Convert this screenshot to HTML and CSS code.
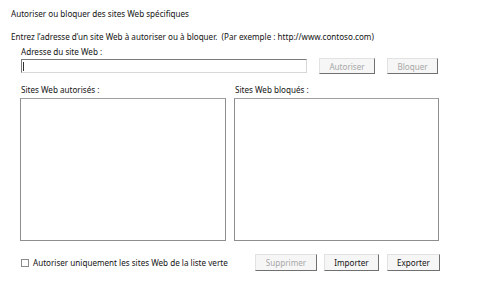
FILE: index.html
```html
<!DOCTYPE html>
<html lang="fr">
<head>
	<meta charset="UTF-8">
	<title>Sites Web spécifiques</title>
	<link rel="stylesheet" href="styles.css">
</head>
<body>
	<div class="main">
		<p class="title">Autoriser ou bloquer des sites Web spécifiques</p>
		<p class="intro">Entrez l’adresse d’un site Web à autoriser ou à bloquer.&nbsp; (Par exemple : http://www.contoso.com)</p>
		<div class="field">
			<p class="lbl">Adresse du site Web :</p>
			<div class="row">
				<div class="input"><span class="caret"></span></div>
				<button class="btn off w56">Autoriser</button>
				<button class="btn off w51">Bloquer</button>
			</div>
		</div>
		<div class="lists">
			<div class="col">
				<p class="lbl">Sites Web autorisés :</p>
				<div class="box"></div>
			</div>
			<div class="col">
				<p class="lbl">Sites Web bloqués :</p>
				<div class="box"></div>
			</div>
		</div>
		<div class="foot">
			<label class="chk"><span class="tick"></span>Autoriser uniquement les sites Web de la liste verte</label>
			<div class="btns">
				<button class="btn off w62">Supprimer</button>
				<button class="btn w55">Importer</button>
				<button class="btn w53">Exporter</button>
			</div>
		</div>
	</div>
</body>
</html>
```
FILE: styles.css
```css
*{margin:0;padding:0;box-sizing:border-box;}
body{background:#fff;font-family:"Noto Sans","DejaVu Sans",sans-serif;font-size:8.1px;color:#141414;}
.main{width:480px;height:300px;padding:9px 0 0 11px;}
.title{line-height:10px;}
.intro{line-height:10px;margin-top:13px;}
.field{padding-left:10px;margin-top:5px;}
.lbl{line-height:10px;}
.row{display:flex;align-items:center;margin-top:1px;}
.input{width:286px;height:14px;border:1px solid;border-color:#7a7a7a #d8d8d8 #d8d8d8 #7a7a7a;padding:2px 0 0 1px;}
.caret{display:block;width:1px;height:9px;background:#333;}
.btn{font-family:inherit;font-size:8.1px;height:16px;background:#f6f6f6;color:#141414;border:1px solid;border-color:#e2e2e2 #707070 #707070 #e2e2e2;margin-left:12px;}
.btn.off{color:#a8a8a8;}
.w56{width:56px;}
.w51{width:51px;}
.w62{width:62px;}
.w55{width:55px;margin-left:7px;}
.w53{width:53px;margin-left:8px;}
.lists{display:flex;gap:8px;padding-left:9px;margin-top:11px;}
.col .lbl{margin-bottom:3px;padding-left:1px;}
.lists .col:first-child .box{width:206px;}
.box{width:205px;height:143px;border:1px solid #8e8e8e;border-top-color:#a0a0a0;}
.foot{display:flex;align-items:center;justify-content:space-between;width:429px;padding-left:10px;margin-top:13px;}
.chk{display:flex;align-items:center;}
.tick{width:8px;height:8px;border:1px solid #8a8a8a;margin-right:4px;background:#fff;}
.btns{display:flex;}
.btns .btn{height:17px;}
.btns .w62{margin-left:0;}
```
